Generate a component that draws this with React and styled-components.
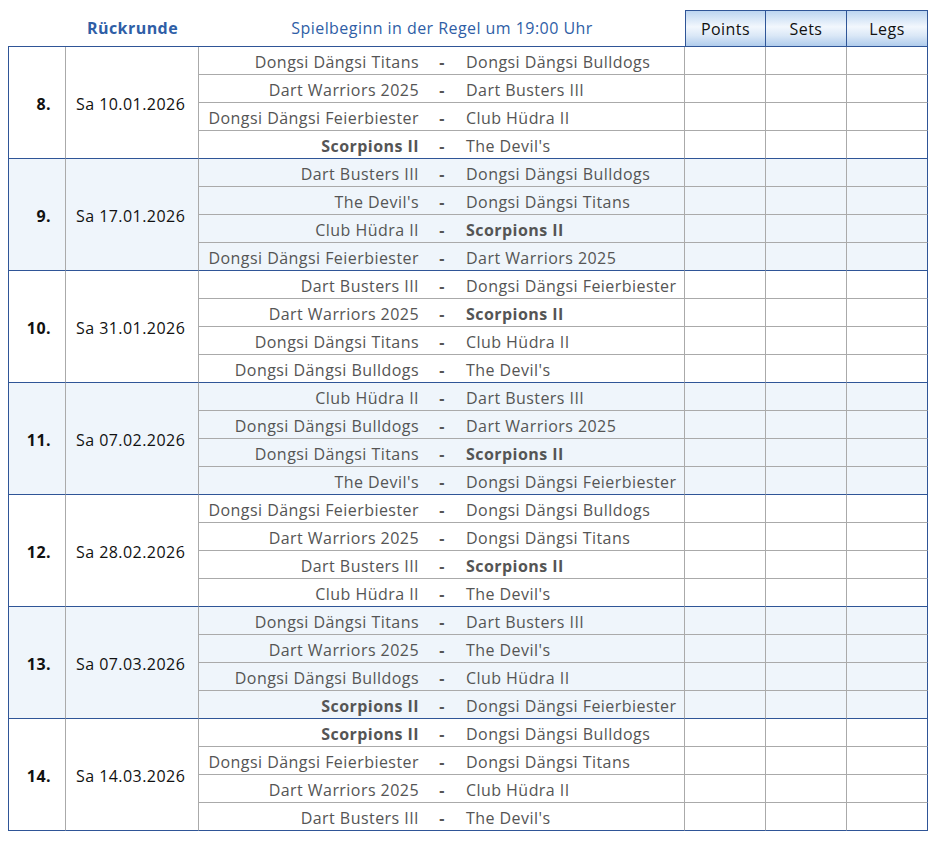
import styled, { createGlobalStyle } from "styled-components";

const colors = {
    blue: "#2f5597",
    title: "#2f5ea6",
    grid: "#aaaaaa",
    band: "#eff5fb",
    team: "#555555",
    ink: "#111111",
};

const rounds = [
    {
        nr: "8.",
        date: "Sa 10.01.2026",
        games: [
            ["Dongsi Dängsi Titans", "Dongsi Dängsi Bulldogs"],
            ["Dart Warriors 2025", "Dart Busters III"],
            ["Dongsi Dängsi Feierbiester", "Club Hüdra II"],
            ["Scorpions II", "The Devil's"],
        ],
    },
    {
        nr: "9.",
        date: "Sa 17.01.2026",
        games: [
            ["Dart Busters III", "Dongsi Dängsi Bulldogs"],
            ["The Devil's", "Dongsi Dängsi Titans"],
            ["Club Hüdra II", "Scorpions II"],
            ["Dongsi Dängsi Feierbiester", "Dart Warriors 2025"],
        ],
    },
    {
        nr: "10.",
        date: "Sa 31.01.2026",
        games: [
            ["Dart Busters III", "Dongsi Dängsi Feierbiester"],
            ["Dart Warriors 2025", "Scorpions II"],
            ["Dongsi Dängsi Titans", "Club Hüdra II"],
            ["Dongsi Dängsi Bulldogs", "The Devil's"],
        ],
    },
    {
        nr: "11.",
        date: "Sa 07.02.2026",
        games: [
            ["Club Hüdra II", "Dart Busters III"],
            ["Dongsi Dängsi Bulldogs", "Dart Warriors 2025"],
            ["Dongsi Dängsi Titans", "Scorpions II"],
            ["The Devil's", "Dongsi Dängsi Feierbiester"],
        ],
    },
    {
        nr: "12.",
        date: "Sa 28.02.2026",
        games: [
            ["Dongsi Dängsi Feierbiester", "Dongsi Dängsi Bulldogs"],
            ["Dart Warriors 2025", "Dongsi Dängsi Titans"],
            ["Dart Busters III", "Scorpions II"],
            ["Club Hüdra II", "The Devil's"],
        ],
    },
    {
        nr: "13.",
        date: "Sa 07.03.2026",
        games: [
            ["Dongsi Dängsi Titans", "Dart Busters III"],
            ["Dart Warriors 2025", "The Devil's"],
            ["Dongsi Dängsi Bulldogs", "Club Hüdra II"],
            ["Scorpions II", "Dongsi Dängsi Feierbiester"],
        ],
    },
    {
        nr: "14.",
        date: "Sa 14.03.2026",
        games: [
            ["Scorpions II", "Dongsi Dängsi Bulldogs"],
            ["Dongsi Dängsi Feierbiester", "Dongsi Dängsi Titans"],
            ["Dart Warriors 2025", "Club Hüdra II"],
            ["Dart Busters III", "The Devil's"],
        ],
    },
];

// own team is printed bold
const ownTeam = "Scorpions II";

const GlobalStyle = createGlobalStyle`
    body {
        margin: 10px 8px 8px 8px;
        background: #fff;
        font-family: "Open Sans", "Noto Sans", sans-serif;
        font-size: 16px;
        letter-spacing: 0.45px;
    }
`;

const StyledTable = styled.table`
    width: 920px;
    table-layout: fixed;
    border-collapse: separate;
    border-spacing: 0;

    td,
    th {
        box-sizing: border-box;
        padding: 0;
        white-space: nowrap;
        overflow: hidden;
    }
`;

const HeadTitle = styled.th`
    height: 37px;
    border-bottom: 1px solid ${colors.blue};
    color: ${colors.title};
    font-weight: ${({ $bold }) => ($bold ? 700 : 400)};
    text-align: center;
    vertical-align: middle;
`;

const HeadScore = styled.th`
    height: 37px;
    border-top: 1px solid ${colors.blue};
    border-bottom: 1px solid ${colors.blue};
    border-right: 1px solid ${colors.blue};
    border-left: ${({ $first }) => ($first ? `1px solid ${colors.blue}` : "none")};
    background: linear-gradient(to bottom, #bcd5f0 0%, #f2f7fd 45%, #dbe8f7 70%, #b0ccec 100%);
    color: ${colors.ink};
    font-weight: 400;
    text-align: center;
`;

const MatchRow = styled.tr`
    background: ${({ $shade }) => ($shade ? colors.band : "#fff")};

    td {
        padding-top: 2px;
    }
`;

const groupLine = ({ $last }) => `1px solid ${$last ? colors.blue : colors.grid}`;

const NumberCell = styled.td`
    border-left: 1px solid ${colors.blue};
    border-right: 1px solid ${colors.grid};
    border-bottom: 1px solid ${colors.blue};
    padding-right: 14px !important;
    text-align: right;
    font-weight: 700;
    color: ${colors.ink};
`;

const DateCell = styled.td`
    border-right: 1px solid ${colors.grid};
    border-bottom: 1px solid ${colors.blue};
    padding-left: 10px !important;
    color: ${colors.ink};
`;

const TeamCell = styled.td`
    height: 28px;
    border-bottom: ${groupLine};
    border-right: ${({ $side }) => ($side === "away" ? `1px solid ${colors.grid}` : "none")};
    text-align: ${({ $side }) => ($side === "home" ? "right" : "left")};
    padding-right: ${({ $side }) => ($side === "home" ? "15px" : "0")} !important;
    padding-left: ${({ $side }) => ($side === "home" ? "0" : "16px")} !important;
    color: ${colors.team};
    font-weight: ${({ $own }) => ($own ? 700 : 400)};
`;

const DashCell = styled.td`
    border-bottom: ${groupLine};
    text-align: center;
    color: ${colors.team};
    font-weight: 700;
`;

const ScoreCell = styled.td`
    border-bottom: ${groupLine};
    border-right: 1px solid ${({ $edge }) => ($edge ? colors.blue : colors.grid)};
`;

const App = () => {
    return (
        <>
            <GlobalStyle />
            <StyledTable>
                <colgroup>
                    <col style={{ width: 58 }} />
                    <col style={{ width: 133 }} />
                    <col style={{ width: 235 }} />
                    <col style={{ width: 16 }} />
                    <col style={{ width: 235 }} />
                    <col style={{ width: 81 }} />
                    <col style={{ width: 81 }} />
                    <col style={{ width: 81 }} />
                </colgroup>
                <thead>
                    <tr>
                        <HeadTitle />
                        <HeadTitle $bold>Rückrunde</HeadTitle>
                        <HeadTitle colSpan={3}>Spielbeginn in der Regel um 19:00 Uhr</HeadTitle>
                        <HeadScore $first>Points</HeadScore>
                        <HeadScore>Sets</HeadScore>
                        <HeadScore>Legs</HeadScore>
                    </tr>
                </thead>
                <tbody>
                    {rounds.map((round, r) =>
                        round.games.map(([home, away], g) => {
                            const last = g === round.games.length - 1;
                            return (
                                <MatchRow key={`${round.nr}-${g}`} $shade={r % 2 === 1}>
                                    {g === 0 && (
                                        <>
                                            <NumberCell rowSpan={4}>{round.nr}</NumberCell>
                                            <DateCell rowSpan={4}>{round.date}</DateCell>
                                        </>
                                    )}
                                    <TeamCell $side="home" $last={last} $own={home === ownTeam}>
                                        {home}
                                    </TeamCell>
                                    <DashCell $last={last}>-</DashCell>
                                    <TeamCell $side="away" $last={last} $own={away === ownTeam}>
                                        {away}
                                    </TeamCell>
                                    <ScoreCell $last={last} />
                                    <ScoreCell $last={last} />
                                    <ScoreCell $last={last} $edge />
                                </MatchRow>
                            );
                        })
                    )}
                </tbody>
            </StyledTable>
        </>
    );
};

export default App;
